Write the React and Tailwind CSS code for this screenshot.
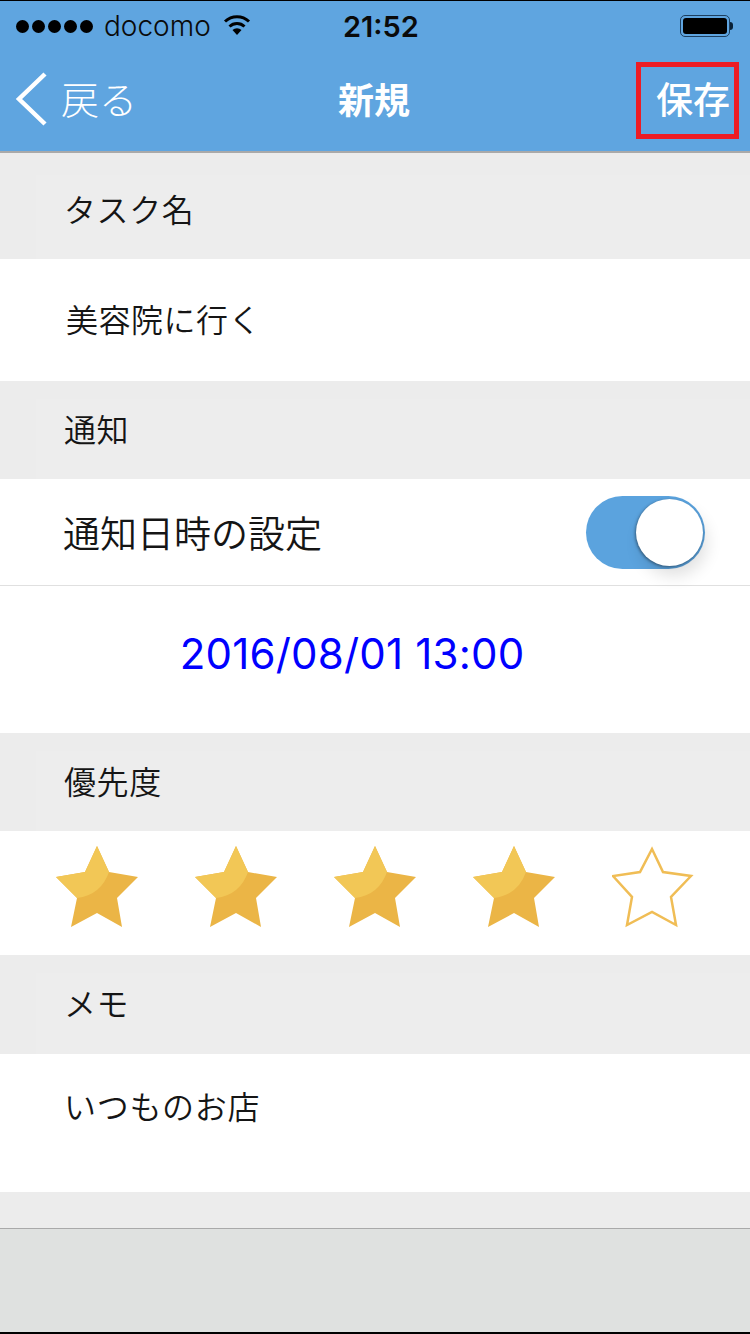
import clsx from 'clsx';

const JP = "font-['Noto_Sans_CJK_JP',sans-serif]";
const LATIN = "font-['Inter',sans-serif]";

const Section = ({ className, inner, label }) => (
    <div className={clsx('bg-[#ececec] pl-9 flex flex-col', className)}>
        <div className={clsx('flex-1 bg-[#ededed] flex items-center', inner)}>
            <span className={clsx('text-[32px] leading-none tracking-[0.6px] text-[#151515] font-[350] pl-[28px]', JP)}>{label}</span>
        </div>
    </div>
);

const STAR = 'M41 0 L53 26 L82 31 L61 52 L66 81 L41 67 L15 81 L21 52 L0 31 L29 26 Z';

const Star = ({ filled }) => (
    <svg width="82" height="82" viewBox="0 0 82 82">
        {filled ? (
            <>
                <path d={STAR} fill="#ebb546" />
                <path d="M41 0 L53 26 Q45 49 21 52 L0 31 L29 26 Z" fill="#f2c756" />
            </>
        ) : (
            <path d="M40 3 L51 26 L79 30 L59 51 L64 79 L40 66 L15 79 L20 51 L1 30 L28 26 Z" fill="none" stroke="#f0bd55" strokeWidth="2.5" />
        )}
    </svg>
);

const StatusBar = () => (
    <div className={clsx('h-[50px] flex items-center relative text-[#0a0a0a]', LATIN)}>
        <div className="flex gap-[3px] pl-4">
            {[0, 1, 2, 3, 4].map((i) => (
                <span key={i} className="w-[13px] h-[13px] rounded-full bg-black" />
            ))}
        </div>
        <span className="ml-[11px] text-[28px] font-light leading-none">docomo</span>
        <svg className="ml-[12px] -translate-y-[1px]" width="28" height="22" viewBox="0 0 28 22">
            <path d="M14 21 L9.5 16 A6.5 6.5 0 0 1 18.5 16 Z" fill="#000" />
            <path d="M6.5 12.5 A11 11 0 0 1 21.5 12.5 M2 7.5 A17.5 17.5 0 0 1 26 7.5" fill="none" stroke="#000" strokeWidth="3" />
        </svg>
        <span className="absolute left-[343px] text-[29px] font-semibold leading-none">21:52</span>
        <div className="absolute left-[680px] flex items-center">
            <div className="w-[50px] h-[22px] rounded-[5px] border border-[#1d3f5f] p-[2px]">
                <div className="w-full h-full rounded-[3px] bg-black" />
            </div>
            <div className="w-[3px] h-[8px] rounded-r-full bg-[#0a2238]" />
        </div>
    </div>
);

const NavBar = () => (
    <div className={clsx('h-[100px] flex items-center justify-between relative text-white pb-[4px]', JP)}>
        <div className="flex items-center pl-[15px]">
            <svg width="34" height="56" viewBox="0 0 34 56">
                <path d="M30 3 L4 28 L30 53" fill="none" stroke="#fff" strokeWidth="4.5" />
            </svg>
            <span className="ml-[12px] text-[38px] font-light leading-none -translate-y-[1px]">戻る</span>
        </div>
        <span className="absolute left-[338px] text-[36px] font-bold leading-none -translate-y-[1px]">新規</span>
        <span className="pr-[20px] text-[37px] font-medium leading-none -translate-y-[1px]">保存</span>
        <div className="absolute left-[636px] top-[11px] w-[103px] h-[77px] border-[5px] border-[#ed1c24]" />
    </div>
);

export default function App() {
    return (
        <div className="w-[750px] h-[1334px] flex flex-col bg-white overflow-hidden">
            <div className="h-px bg-black" />
            <div className="bg-[#5fa5e0]">
                <StatusBar />
                <NavBar />
            </div>
            <div className="h-[2px] bg-[#a9a9a9]" />

            <Section className="h-[106px]" inner="mt-[22px] pb-[18px]" label="タスク名" />
            <div className={clsx('h-[122px] flex items-center pl-[66px] pb-[4px] text-[32px] tracking-[0.5px] text-[#151515] font-[350]', JP)}>美容院に行く</div>

            <Section className="h-[98px]" inner="mt-[18px] pb-[22px]" label="通知" />
            <div className="h-[107px] flex items-center justify-between pl-[63px] pr-[45px] border-b border-[#e0e0e0]">
                <span className={clsx('text-[37px] leading-none text-[#151515] font-[350]', JP)}>通知日時の設定</span>
                <div className="w-[119px] h-[73px] rounded-full bg-[#5ba3de] flex items-center justify-end pr-[2px]">
                    <div className="w-[67px] h-[67px] rounded-full bg-white shadow-[-1px_1px_3px_rgba(0,0,0,0.4),4px_10px_16px_rgba(0,0,0,0.12)]" />
                </div>
            </div>
            <div className={clsx('h-[147px] flex justify-center pt-[38px] pr-[46px] text-[42px] leading-[60px] tracking-[0.2px] text-[#0000ff]', LATIN)}>2016/08/01 13:00</div>

            <Section className="h-[98px]" inner="mt-[18px] pb-[22px]" label="優先度" />
            <div className="h-[124px] grid grid-cols-5 pl-[28px] pr-[28px] pt-[15px]">
                {[true, true, true, true, false].map((filled, i) => (
                    <div key={i} className="flex justify-center">
                        <Star filled={filled} />
                    </div>
                ))}
            </div>

            <Section className="h-[99px]" inner="mt-[18px] pb-[24px]" label="メモ" />
            <div className={clsx('h-[138px] pl-[64px] pt-[27px] text-[32px] leading-[48px] tracking-[0.7px] text-[#151515] font-[350]', JP)}>いつものお店</div>

            <div className="h-[36px] bg-[#ececec]" />
            <div className="h-px bg-[#a9a9a9]" />
            <div className="flex-1 bg-[#dfe1e0]" />
            <div className="h-[2px] bg-black" />
        </div>
    );
}
